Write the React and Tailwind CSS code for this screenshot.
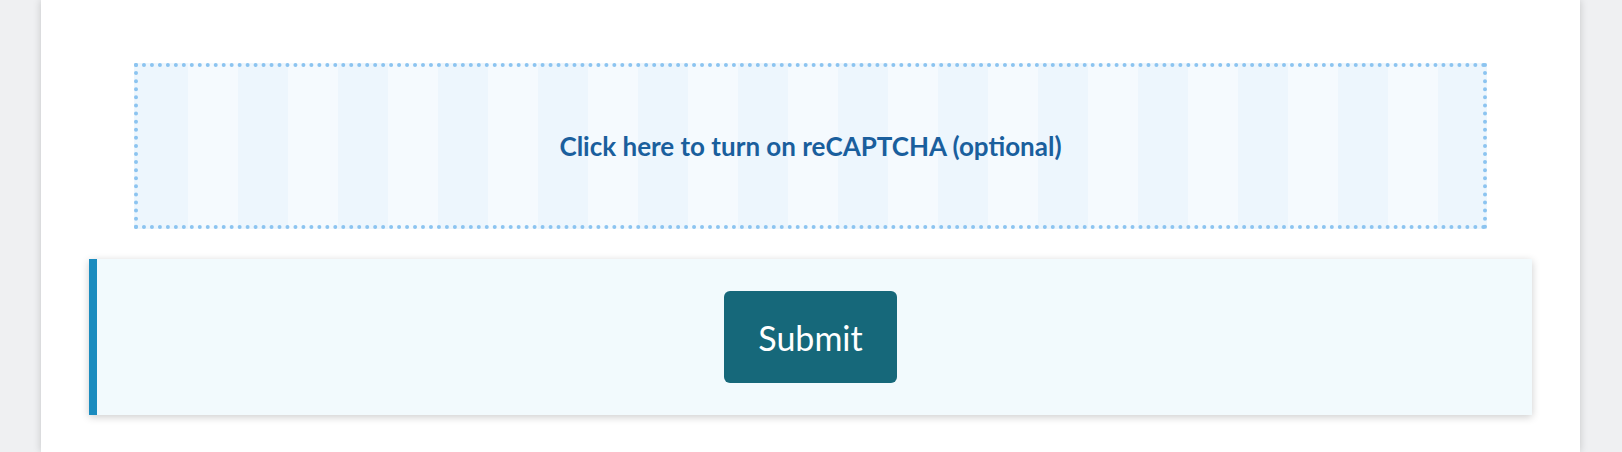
export default function App() {
  return (
    <div className="min-h-[452px] h-[452px] overflow-hidden bg-[#eff0f2] font-['Lato','Liberation_Sans',sans-serif]">
      <div className="mx-[41px] mr-[42px] h-full bg-white px-[48px] pt-[63px] shadow-[0_0_8px_rgba(0,0,0,0.18)]">
        <button
          type="button"
          className="mx-[45px] flex h-[166px] w-[calc(100%-90px)] items-center justify-center border-4 border-dotted border-[#8cc4f0] bg-[image:repeating-linear-gradient(90deg,#edf6fd_0px,#edf6fd_50px,#f5fafe_50px,#f5fafe_100px)]"
        >
          <span className="text-[26px] font-bold text-[#1a5f9d]">
            Click here to turn on reCAPTCHA (optional)
          </span>
        </button>

        {/* left accent bar drawn as inset shadow so the button centres on the full panel */}
        <div className="mt-[30px] flex h-[156px] items-center justify-center bg-[#f2fafd] shadow-[inset_8px_0_0_#1b8cbf,0_2px_8px_rgba(0,0,0,0.2)]">
          <button
            type="button"
            className="h-[92px] w-[173px] rounded-md bg-[#16687a] text-[34px] text-white"
          >
            Submit
          </button>
        </div>
      </div>
    </div>
  );
}
